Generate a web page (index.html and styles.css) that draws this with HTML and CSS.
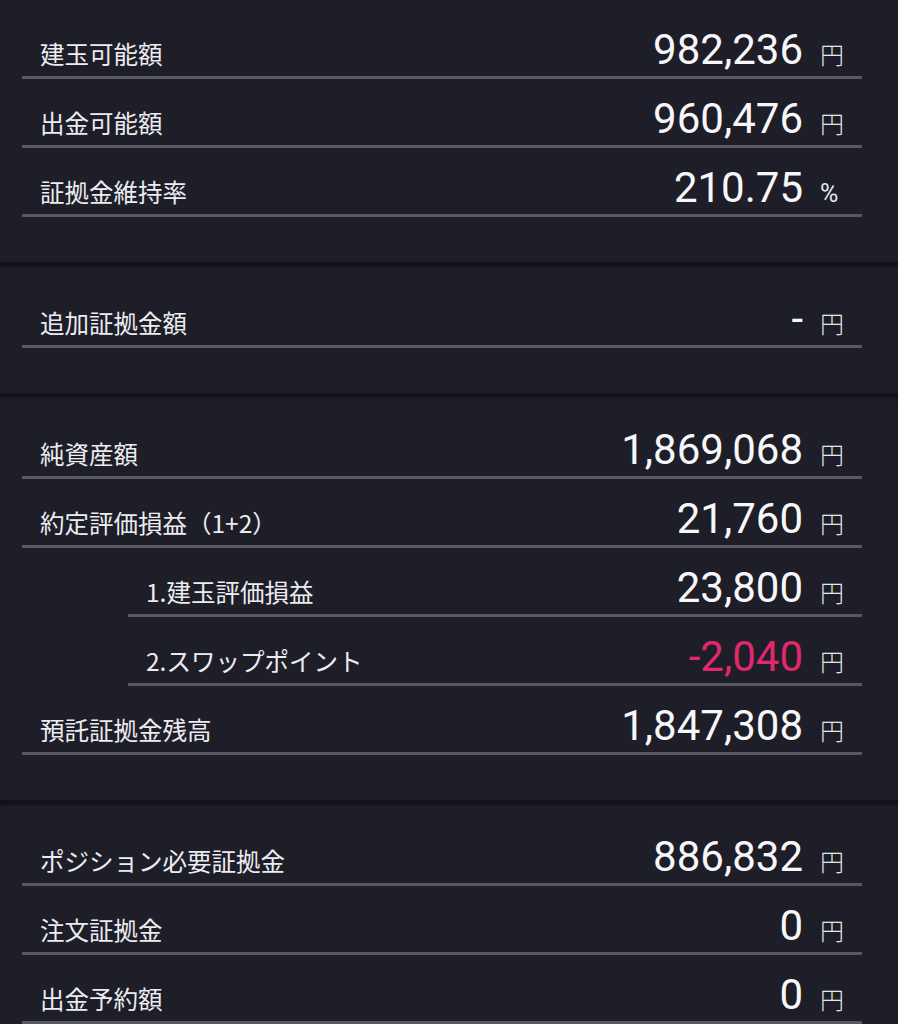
FILE: index.html
```html
<!DOCTYPE html>
<html lang="ja">
<head>
  <meta charset="UTF-8" />
  <meta name="viewport" content="width=device-width, initial-scale=1.0" />
  <title>口座状況</title>
  <link rel="stylesheet" href="styles.css">
</head>
<body>
  <div class="account">
    <div class="section first">
      <div class="row"><span class="label">建玉可能額</span><span class="value">982,236</span><span class="unit">円</span></div>
      <div class="row"><span class="label">出金可能額</span><span class="value">960,476</span><span class="unit">円</span></div>
      <div class="row"><span class="label">証拠金維持率</span><span class="value">210.75</span><span class="unit pct">%</span></div>
    </div>

    <div class="section">
      <div class="row"><span class="label">追加証拠金額</span><span class="value">-</span><span class="unit">円</span></div>
    </div>

    <div class="section">
      <div class="row"><span class="label">純資産額</span><span class="value">1,869,068</span><span class="unit">円</span></div>
      <div class="row"><span class="label">約定評価損益（1+2）</span><span class="value">21,760</span><span class="unit">円</span></div>
      <div class="row sub"><span class="label">1.建玉評価損益</span><span class="value">23,800</span><span class="unit">円</span></div>
      <div class="row sub"><span class="label">2.スワップポイント</span><span class="value minus">-2,040</span><span class="unit">円</span></div>
      <div class="row"><span class="label">預託証拠金残高</span><span class="value">1,847,308</span><span class="unit">円</span></div>
    </div>

    <div class="section">
      <div class="row"><span class="label">ポジション必要証拠金</span><span class="value">886,832</span><span class="unit">円</span></div>
      <div class="row"><span class="label">注文証拠金</span><span class="value">0</span><span class="unit">円</span></div>
      <div class="row"><span class="label">出金予約額</span><span class="value">0</span><span class="unit">円</span></div>
    </div>
  </div>
</body>
</html>
```

FILE: styles.css
```css
html, body {
  margin: 0;
  padding: 0;
  background: #1e1e28;
}
body {
  font-family: "Noto Sans CJK JP", "Noto Sans", sans-serif;
  color: #ececf0;
}
.account {
  width: 898px;
  overflow: hidden;
}
.section {
  padding: 13px 36px 45px 22px;
  border-top: 4px solid #121219;
  box-shadow: inset 0 3px 4px -2px rgba(0, 0, 0, 0.35);
}
.section.first {
  padding-top: 10px;
  border-top: none;
  box-shadow: none;
}
.row {
  box-sizing: border-box;
  height: 69px;
  display: flex;
  align-items: baseline;
  padding: 19px 18px 0 18px;
  border-bottom: 3px solid #595962;
}
.row.sub {
  margin-left: 106px;
}
.label {
  flex: 1;
  font-size: 24.5px;
  line-height: 1;
  white-space: nowrap;
}
.value {
  font-family: Roboto, "Liberation Sans", sans-serif;
  font-size: 42px;
  line-height: 1;
  color: #f7f7f9;
}
.value.minus {
  color: #e0286a;
}
.unit {
  width: 24px;
  margin-left: 17px;
  font-size: 24px;
  line-height: 1;
  font-weight: 300;
  color: #e6e6ea;
}
.unit.pct {
  font-family: Roboto, "Liberation Sans", sans-serif;
  font-size: 25px;
  font-weight: 400;
}
```
